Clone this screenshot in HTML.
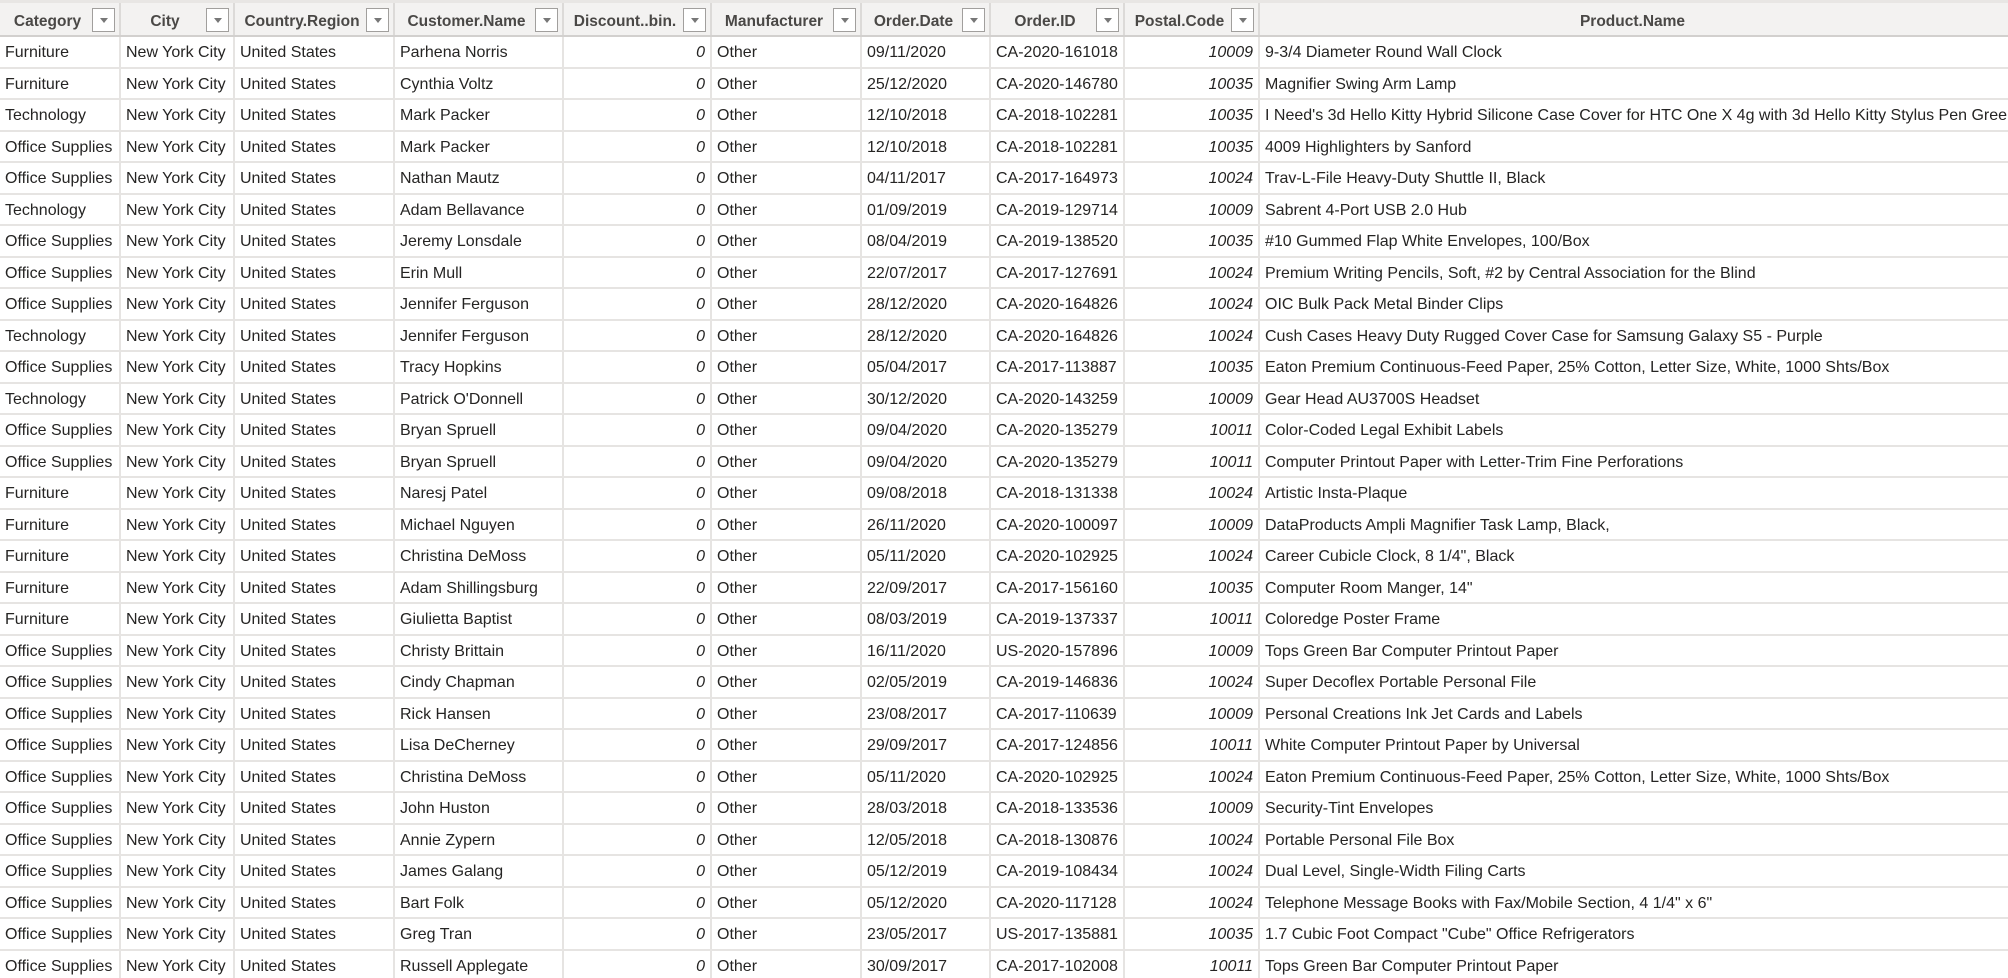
<!DOCTYPE html>
<html><head><meta charset="utf-8"><style>
html,body{margin:0;padding:0;background:#fff;width:2008px;height:978px;overflow:hidden}
body{font-family:"Liberation Sans",sans-serif;color:#252423}
.top{height:3px;background:#e8e6e4}
table{border-collapse:collapse;table-layout:fixed;width:2030px}
th{height:27px;background:#f3f2f1;font-size:15.5px;font-weight:bold;color:#4a4846;border-right:2px solid #dcdad8;border-bottom:2px solid #d2d0ce;position:relative;padding:5px 30px 0 6px;text-align:center;white-space:nowrap;overflow:hidden}
th .dd{position:absolute;right:4px;top:5px;width:21px;height:22px;border:1px solid #a19f9d;background:#fff}
th .dd:after{content:"";position:absolute;left:7px;top:9px;border-left:4px solid transparent;border-right:4px solid transparent;border-top:5px solid #777}
td{height:26.5px;font-size:16px;border-right:2px solid #e6e4e2;border-bottom:2px solid #e6e4e2;padding:3px 5px 0;white-space:nowrap;overflow:hidden}
td.n{text-align:right;font-style:italic}
</style></head><body>
<div class="top"></div>
<table>
<colgroup><col style="width:120px"><col style="width:114px"><col style="width:160px"><col style="width:169px"><col style="width:148px"><col style="width:150px"><col style="width:129px"><col style="width:134px"><col style="width:135px"><col style="width:771px"></colgroup>
<tr><th>Category<span class="dd"></span></th><th>City<span class="dd"></span></th><th>Country.Region<span class="dd"></span></th><th>Customer.Name<span class="dd"></span></th><th>Discount..bin.<span class="dd"></span></th><th>Manufacturer<span class="dd"></span></th><th>Order.Date<span class="dd"></span></th><th>Order.ID<span class="dd"></span></th><th>Postal.Code<span class="dd"></span></th><th style="padding-right:30px">Product.Name</th></tr>
<tr><td>Furniture</td><td>New York City</td><td>United States</td><td>Parhena Norris</td><td class="n">0</td><td>Other</td><td>09/11/2020</td><td>CA-2020-161018</td><td class="n">10009</td><td>9-3/4 Diameter Round Wall Clock</td></tr>
<tr><td>Furniture</td><td>New York City</td><td>United States</td><td>Cynthia Voltz</td><td class="n">0</td><td>Other</td><td>25/12/2020</td><td>CA-2020-146780</td><td class="n">10035</td><td>Magnifier Swing Arm Lamp</td></tr>
<tr><td>Technology</td><td>New York City</td><td>United States</td><td>Mark Packer</td><td class="n">0</td><td>Other</td><td>12/10/2018</td><td>CA-2018-102281</td><td class="n">10035</td><td>I Need's 3d Hello Kitty Hybrid Silicone Case Cover for HTC One X 4g with 3d Hello Kitty Stylus Pen Green/pink</td></tr>
<tr><td>Office Supplies</td><td>New York City</td><td>United States</td><td>Mark Packer</td><td class="n">0</td><td>Other</td><td>12/10/2018</td><td>CA-2018-102281</td><td class="n">10035</td><td>4009 Highlighters by Sanford</td></tr>
<tr><td>Office Supplies</td><td>New York City</td><td>United States</td><td>Nathan Mautz</td><td class="n">0</td><td>Other</td><td>04/11/2017</td><td>CA-2017-164973</td><td class="n">10024</td><td>Trav-L-File Heavy-Duty Shuttle II, Black</td></tr>
<tr><td>Technology</td><td>New York City</td><td>United States</td><td>Adam Bellavance</td><td class="n">0</td><td>Other</td><td>01/09/2019</td><td>CA-2019-129714</td><td class="n">10009</td><td>Sabrent 4-Port USB 2.0 Hub</td></tr>
<tr><td>Office Supplies</td><td>New York City</td><td>United States</td><td>Jeremy Lonsdale</td><td class="n">0</td><td>Other</td><td>08/04/2019</td><td>CA-2019-138520</td><td class="n">10035</td><td>#10 Gummed Flap White Envelopes, 100/Box</td></tr>
<tr><td>Office Supplies</td><td>New York City</td><td>United States</td><td>Erin Mull</td><td class="n">0</td><td>Other</td><td>22/07/2017</td><td>CA-2017-127691</td><td class="n">10024</td><td>Premium Writing Pencils, Soft, #2 by Central Association for the Blind</td></tr>
<tr><td>Office Supplies</td><td>New York City</td><td>United States</td><td>Jennifer Ferguson</td><td class="n">0</td><td>Other</td><td>28/12/2020</td><td>CA-2020-164826</td><td class="n">10024</td><td>OIC Bulk Pack Metal Binder Clips</td></tr>
<tr><td>Technology</td><td>New York City</td><td>United States</td><td>Jennifer Ferguson</td><td class="n">0</td><td>Other</td><td>28/12/2020</td><td>CA-2020-164826</td><td class="n">10024</td><td>Cush Cases Heavy Duty Rugged Cover Case for Samsung Galaxy S5 - Purple</td></tr>
<tr><td>Office Supplies</td><td>New York City</td><td>United States</td><td>Tracy Hopkins</td><td class="n">0</td><td>Other</td><td>05/04/2017</td><td>CA-2017-113887</td><td class="n">10035</td><td>Eaton Premium Continuous-Feed Paper, 25% Cotton, Letter Size, White, 1000 Shts/Box</td></tr>
<tr><td>Technology</td><td>New York City</td><td>United States</td><td>Patrick O'Donnell</td><td class="n">0</td><td>Other</td><td>30/12/2020</td><td>CA-2020-143259</td><td class="n">10009</td><td>Gear Head AU3700S Headset</td></tr>
<tr><td>Office Supplies</td><td>New York City</td><td>United States</td><td>Bryan Spruell</td><td class="n">0</td><td>Other</td><td>09/04/2020</td><td>CA-2020-135279</td><td class="n">10011</td><td>Color-Coded Legal Exhibit Labels</td></tr>
<tr><td>Office Supplies</td><td>New York City</td><td>United States</td><td>Bryan Spruell</td><td class="n">0</td><td>Other</td><td>09/04/2020</td><td>CA-2020-135279</td><td class="n">10011</td><td>Computer Printout Paper with Letter-Trim Fine Perforations</td></tr>
<tr><td>Furniture</td><td>New York City</td><td>United States</td><td>Naresj Patel</td><td class="n">0</td><td>Other</td><td>09/08/2018</td><td>CA-2018-131338</td><td class="n">10024</td><td>Artistic Insta-Plaque</td></tr>
<tr><td>Furniture</td><td>New York City</td><td>United States</td><td>Michael Nguyen</td><td class="n">0</td><td>Other</td><td>26/11/2020</td><td>CA-2020-100097</td><td class="n">10009</td><td>DataProducts Ampli Magnifier Task Lamp, Black,</td></tr>
<tr><td>Furniture</td><td>New York City</td><td>United States</td><td>Christina DeMoss</td><td class="n">0</td><td>Other</td><td>05/11/2020</td><td>CA-2020-102925</td><td class="n">10024</td><td>Career Cubicle Clock, 8 1/4", Black</td></tr>
<tr><td>Furniture</td><td>New York City</td><td>United States</td><td>Adam Shillingsburg</td><td class="n">0</td><td>Other</td><td>22/09/2017</td><td>CA-2017-156160</td><td class="n">10035</td><td>Computer Room Manger, 14"</td></tr>
<tr><td>Furniture</td><td>New York City</td><td>United States</td><td>Giulietta Baptist</td><td class="n">0</td><td>Other</td><td>08/03/2019</td><td>CA-2019-137337</td><td class="n">10011</td><td>Coloredge Poster Frame</td></tr>
<tr><td>Office Supplies</td><td>New York City</td><td>United States</td><td>Christy Brittain</td><td class="n">0</td><td>Other</td><td>16/11/2020</td><td>US-2020-157896</td><td class="n">10009</td><td>Tops Green Bar Computer Printout Paper</td></tr>
<tr><td>Office Supplies</td><td>New York City</td><td>United States</td><td>Cindy Chapman</td><td class="n">0</td><td>Other</td><td>02/05/2019</td><td>CA-2019-146836</td><td class="n">10024</td><td>Super Decoflex Portable Personal File</td></tr>
<tr><td>Office Supplies</td><td>New York City</td><td>United States</td><td>Rick Hansen</td><td class="n">0</td><td>Other</td><td>23/08/2017</td><td>CA-2017-110639</td><td class="n">10009</td><td>Personal Creations Ink Jet Cards and Labels</td></tr>
<tr><td>Office Supplies</td><td>New York City</td><td>United States</td><td>Lisa DeCherney</td><td class="n">0</td><td>Other</td><td>29/09/2017</td><td>CA-2017-124856</td><td class="n">10011</td><td>White Computer Printout Paper by Universal</td></tr>
<tr><td>Office Supplies</td><td>New York City</td><td>United States</td><td>Christina DeMoss</td><td class="n">0</td><td>Other</td><td>05/11/2020</td><td>CA-2020-102925</td><td class="n">10024</td><td>Eaton Premium Continuous-Feed Paper, 25% Cotton, Letter Size, White, 1000 Shts/Box</td></tr>
<tr><td>Office Supplies</td><td>New York City</td><td>United States</td><td>John Huston</td><td class="n">0</td><td>Other</td><td>28/03/2018</td><td>CA-2018-133536</td><td class="n">10009</td><td>Security-Tint Envelopes</td></tr>
<tr><td>Office Supplies</td><td>New York City</td><td>United States</td><td>Annie Zypern</td><td class="n">0</td><td>Other</td><td>12/05/2018</td><td>CA-2018-130876</td><td class="n">10024</td><td>Portable Personal File Box</td></tr>
<tr><td>Office Supplies</td><td>New York City</td><td>United States</td><td>James Galang</td><td class="n">0</td><td>Other</td><td>05/12/2019</td><td>CA-2019-108434</td><td class="n">10024</td><td>Dual Level, Single-Width Filing Carts</td></tr>
<tr><td>Office Supplies</td><td>New York City</td><td>United States</td><td>Bart Folk</td><td class="n">0</td><td>Other</td><td>05/12/2020</td><td>CA-2020-117128</td><td class="n">10024</td><td>Telephone Message Books with Fax/Mobile Section, 4 1/4" x 6"</td></tr>
<tr><td>Office Supplies</td><td>New York City</td><td>United States</td><td>Greg Tran</td><td class="n">0</td><td>Other</td><td>23/05/2017</td><td>US-2017-135881</td><td class="n">10035</td><td>1.7 Cubic Foot Compact "Cube" Office Refrigerators</td></tr>
<tr><td>Office Supplies</td><td>New York City</td><td>United States</td><td>Russell Applegate</td><td class="n">0</td><td>Other</td><td>30/09/2017</td><td>CA-2017-102008</td><td class="n">10011</td><td>Tops Green Bar Computer Printout Paper</td></tr>
</table>
</body></html>
